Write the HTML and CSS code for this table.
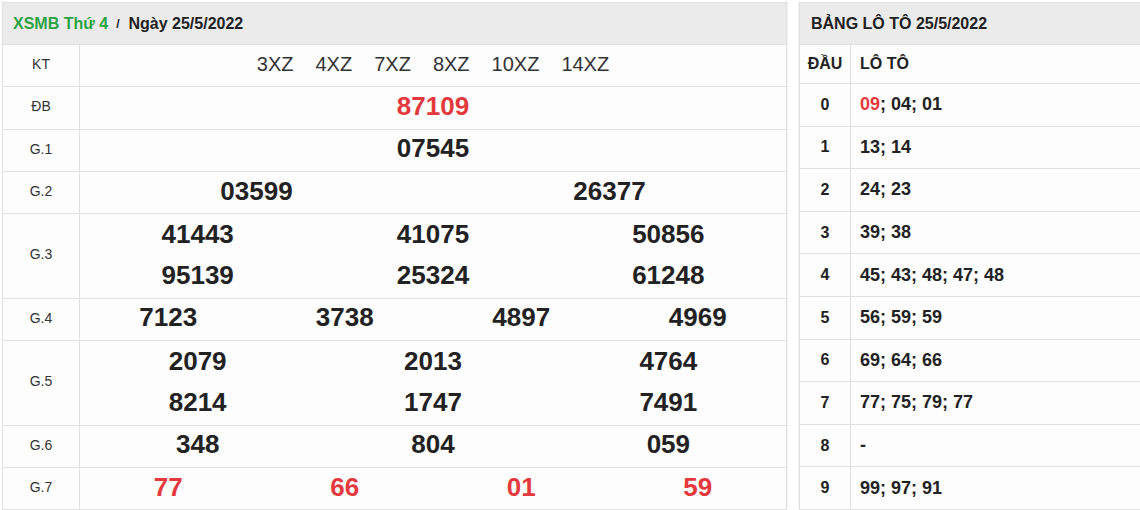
FILE: index.html
```html
<!DOCTYPE html>
<html lang="vi">
<head>
<meta charset="utf-8">
<title>XSMB 25/5/2022</title>
<link rel="stylesheet" href="styles.css">
</head>
<body>
<div class="page">
  <section class="panel results">
    <div class="head"><span class="green">XSMB Thứ 4</span><span class="sep">/</span><span>Ngày 25/5/2022</span></div>
    <div class="row"><div class="label">KT</div><div class="kt"><span>3XZ</span><span>4XZ</span><span>7XZ</span><span>8XZ</span><span>10XZ</span><span>14XZ</span></div></div>
    <div class="row"><div class="label">ĐB</div><div class="nums c1"><span class="red">87109</span></div></div>
    <div class="row"><div class="label">G.1</div><div class="nums c1"><span>07545</span></div></div>
    <div class="row"><div class="label">G.2</div><div class="nums c2"><span>03599</span><span>26377</span></div></div>
    <div class="row double"><div class="label">G.3</div><div class="nums c3"><span>41443</span><span>41075</span><span>50856</span><span>95139</span><span>25324</span><span>61248</span></div></div>
    <div class="row"><div class="label">G.4</div><div class="nums c4"><span>7123</span><span>3738</span><span>4897</span><span>4969</span></div></div>
    <div class="row double"><div class="label">G.5</div><div class="nums c3"><span>2079</span><span>2013</span><span>4764</span><span>8214</span><span>1747</span><span>7491</span></div></div>
    <div class="row"><div class="label">G.6</div><div class="nums c3"><span>348</span><span>804</span><span>059</span></div></div>
    <div class="row"><div class="label">G.7</div><div class="nums c4 red"><span>77</span><span>66</span><span>01</span><span>59</span></div></div>
  </section>
  <div class="gutter"></div>
  <section class="panel loto">
    <div class="head">BẢNG LÔ TÔ 25/5/2022</div>
    <div class="lrow top"><div class="dau">ĐẦU</div><div class="lt">LÔ TÔ</div></div>
    <div class="lrow"><div class="dau">0</div><div class="lt"><span class="red">09</span>; 04; 01</div></div>
    <div class="lrow"><div class="dau">1</div><div class="lt">13; 14</div></div>
    <div class="lrow"><div class="dau">2</div><div class="lt">24; 23</div></div>
    <div class="lrow"><div class="dau">3</div><div class="lt">39; 38</div></div>
    <div class="lrow"><div class="dau">4</div><div class="lt">45; 43; 48; 47; 48</div></div>
    <div class="lrow"><div class="dau">5</div><div class="lt">56; 59; 59</div></div>
    <div class="lrow"><div class="dau">6</div><div class="lt">69; 64; 66</div></div>
    <div class="lrow"><div class="dau">7</div><div class="lt">77; 75; 79; 77</div></div>
    <div class="lrow"><div class="dau">8</div><div class="lt">-</div></div>
    <div class="lrow"><div class="dau">9</div><div class="lt">99; 97; 91</div></div>
  </section>
</div>
</body>
</html>
```

FILE: styles.css
```css
html, body {
  margin: 0;
  padding: 0;
  background: #fff;
  overflow: hidden;
}
body {
  font-family: "Liberation Sans", Arial, sans-serif;
  color: #222;
}
.page {
  display: flex;
  align-items: flex-start;
  padding: 2px 0 0 2px;
  width: 1140px;
  box-sizing: border-box;
}
.panel {
  box-sizing: border-box;
  border: 1px solid #e0e0e0;
  background: #fdfdfd;
  flex: none;
}
.results { width: 785px; }
.loto {
  flex: 1;
  border-right: 0;
}
.gutter {
  flex: none;
  width: 12px;
  height: 508px;
  box-sizing: border-box;
  border-left: 1px solid #f4f4f4;
  border-right: 1px solid #f4f4f4;
  margin-top: -2px;
  background: #fff;
}
.head {
  height: 41px;
  background: #ebebeb;
  display: flex;
  align-items: center;
  padding-left: 10px;
  font-size: 16px;
  font-weight: bold;
  color: #222;
}
.loto .head { padding-left: 11px; }
.green { color: #2ba345; }
.sep {
  font-size: 12px;
  margin: 0 9px 0 8px;
  font-weight: bold;
}
.red { color: #e4393c; }
.row {
  display: flex;
  box-sizing: border-box;
  height: 42.3px;
  border-top: 1px solid #e0e0e0;
}
.row.double { height: 84.6px; }
.label {
  flex: none;
  box-sizing: border-box;
  width: 77px;
  border-right: 1px solid #e0e0e0;
  display: flex;
  align-items: center;
  justify-content: center;
  font-size: 14px;
  color: #333;
  padding-bottom: 3px;
}
.kt {
  flex: 1;
  display: flex;
  align-items: center;
  justify-content: center;
  gap: 22px;
  font-size: 20px;
  color: #333;
  padding-bottom: 3px;
}
.nums {
  flex: 1;
  display: grid;
  grid-auto-rows: 1fr;
  align-items: center;
  justify-items: center;
  font-size: 26px;
  font-weight: bold;
  color: #222;
  padding-bottom: 3px;
}
.row.double .nums { padding-bottom: 2px; }
.c1 { grid-template-columns: 1fr; }
.c2 { grid-template-columns: repeat(2, 1fr); }
.c3 { grid-template-columns: repeat(3, 1fr); }
.c4 { grid-template-columns: repeat(4, 1fr); }
.nums.red { color: #e4393c; }
.lrow {
  display: flex;
  box-sizing: border-box;
  height: 42.6px;
  border-top: 1px solid #e0e0e0;
  font-weight: bold;
}
.lrow.top { height: 39px; font-size: 16px; }
.dau {
  flex: none;
  box-sizing: border-box;
  width: 51px;
  border-right: 1px solid #e0e0e0;
  display: flex;
  align-items: center;
  justify-content: center;
  font-size: 16px;
}
.lt {
  flex: 1;
  display: flex;
  align-items: center;
  padding-left: 9px;
  font-size: 18px;
}
.lrow.top .lt { font-size: 16px; }
```
